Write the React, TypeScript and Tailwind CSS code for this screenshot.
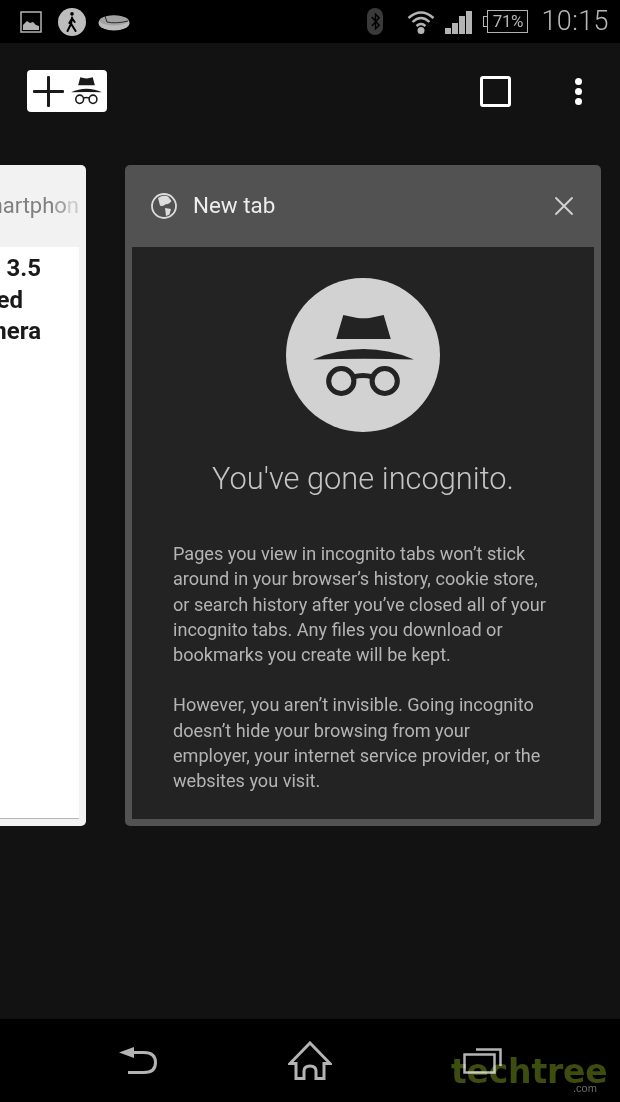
import { X } from 'lucide-react';

function IncognitoGlyph({ className }: { className?: string }) {
    return (
        <svg viewBox="0 0 100 84" preserveAspectRatio="none" className={className} fill="currentColor">
            <path d="M30 1 L44 4 Q50 4.500 56 4 L70 1 L77 25 L23 25 Z" />
            <path d="M0 45.500 Q24 35 50 35 Q76 35 100 45.500 Q50 44 0 45.500 Z" />
            <circle cx="28" cy="67" r="12.500" fill="none" stroke="currentColor" strokeWidth="5" />
            <circle cx="71" cy="67" r="12.500" fill="none" stroke="currentColor" strokeWidth="5" />
            <path d="M40 63 Q49.500 60 59 63" fill="none" stroke="currentColor" strokeWidth="5" />
        </svg>
    );
}

function StatusBar() {
    return (
        <div className="h-[43px] bg-black flex items-center pl-[20px] pr-[11px] text-[#b4b4b4]">
            <svg viewBox="0 0 22 22" className="w-[22px] h-[22px]">
                <rect x="1" y="1" width="20" height="20" fill="none" stroke="currentColor" strokeWidth="1.5" />
                <path d="M3 19 V14 L7 10 L10 12 L13 11 L16 14 L19 15 V19 Z" fill="currentColor" />
            </svg>
            <div className="ml-[16px] w-[28px] h-[28px] rounded-full bg-[#bdbdbd] flex items-center justify-center text-black">
                <svg viewBox="0 0 20 24" className="w-[18px] h-[22px]" fill="none" stroke="currentColor" strokeWidth="2.2" strokeLinecap="round">
                    <circle cx="10" cy="3" r="2" fill="currentColor" stroke="none" />
                    <path d="M10 7 L9 14 L5 22 M9 14 L14 22 M10 8 L7 13 M10 8 L13 12" />
                </svg>
            </div>
            <svg viewBox="0 0 32 18" className="ml-[12px] w-[32px] h-[18px]">
                <ellipse cx="16" cy="10" rx="15.500" ry="7.500" fill="#bcbcbc" />
                <ellipse cx="16" cy="7.500" rx="14.500" ry="5" fill="#a2a2a2" />
                <path d="M7 3 L9 9 Q18 11 30 8" fill="none" stroke="#2a2a2a" strokeWidth="1" />
            </svg>
            <div className="ml-auto w-[16px] h-[27px] rounded-[8px] bg-[#3a3a3a] flex items-center justify-center text-black">
                <svg viewBox="0 0 12 20" className="w-[11px] h-[19px]" fill="none" stroke="currentColor" strokeWidth="1.6">
                    <path d="M2 5 L10 14 L6 18 V2 L10 6 L2 15" />
                </svg>
            </div>
            <svg viewBox="0 0 28 26" className="ml-[24px] w-[28px] h-[26px]" fill="none" stroke="currentColor" strokeWidth="2.4">
                <path d="M1.500 9 Q14 -2 26.500 9" />
                <path d="M5.500 13 Q14 5 22.500 13" />
                <path d="M9.500 17 Q14 13 18.500 17" />
                <circle cx="14" cy="21.500" r="3.500" fill="currentColor" stroke="none" />
            </svg>
            <div className="ml-[10px] flex items-end gap-[1px] h-[24px]">
                <div className="w-[6px] h-[6px] bg-[#b4b4b4]" />
                <div className="w-[6px] h-[11px] bg-[#b4b4b4]" />
                <div className="w-[6px] h-[18px] bg-[#b4b4b4]" />
                <div className="w-[6px] h-[23px] bg-[#b4b4b4]" />
            </div>
            <div className="relative ml-[15px] w-[41px] h-[23px] border border-[#b4b4b4] flex items-center justify-center text-[17px] leading-none font-['Roboto',sans-serif] tracking-tight">
                <div className="absolute left-[-5px] top-[5px] w-[5px] h-[11px] border border-r-0 border-[#b4b4b4]" />
                71%
            </div>
            <div className="ml-[13px] text-[27px] leading-none font-['Roboto',sans-serif] font-light tracking-[0.4px] text-[#b8b8b8]">10:15</div>
        </div>
    );
}

function Toolbar() {
    return (
        <div className="h-[122px] flex items-center pl-[27px] pr-[38px] pb-[26px]">
            <div className="w-[80px] h-[42px] bg-white rounded-[4px] flex items-center pl-[6px] text-[#1a1a1a]">
                <svg viewBox="0 0 31 31" className="w-[31px] h-[31px]" fill="currentColor">
                    <rect x="0" y="14" width="31" height="3" rx="1" />
                    <rect x="14" y="0" width="3" height="31" rx="1" />
                </svg>
                <IncognitoGlyph className="ml-[7px] w-[31px] h-[28px]" />
            </div>
            <div className="ml-auto w-[31px] h-[31px] border-[3px] border-white rounded-[3px]" />
            <div className="ml-[64px] flex flex-col gap-[3px]">
                <div className="w-[7px] h-[7px] rounded-full bg-white" />
                <div className="w-[7px] h-[7px] rounded-full bg-white" />
                <div className="w-[7px] h-[7px] rounded-full bg-white" />
            </div>
        </div>
    );
}

function WebTabCard() {
    return (
        <div className="w-[476px] h-[661px] shrink-0 bg-[#f2f2f2] rounded-[5px] px-[7px] pb-[7px] flex flex-col overflow-hidden">
            <div className="h-[82px] shrink-0 flex items-center justify-end pb-[2px] font-['Roboto',sans-serif] text-[22px] text-[#808080] whitespace-nowrap overflow-hidden">
                Smartph<span className="text-[#a0a0a0]">o</span><span className="text-[#cacaca]">n</span>
            </div>
            <div className="flex-1 bg-white border-b border-[#b8b8b8] pt-[6px] flex flex-col font-['Roboto',sans-serif] font-bold text-[24px] leading-[31.500px] text-[#1a1a1a] whitespace-nowrap text-right">
                <div className="pr-[38px]">l 3.5</div>
                <div className="pr-[56px]">ed</div>
                <div className="pr-[38px]">nera</div>
            </div>
        </div>
    );
}

function IncognitoTabCard() {
    return (
        <div className="w-[476px] h-[661px] shrink-0 bg-[#525252] rounded-[5px] px-[7px] pb-[7px] flex flex-col">
            <div className="h-[82px] shrink-0 flex items-center pl-[19px] pr-[14px]">
                <svg viewBox="0 0 26 26" className="w-[26px] h-[26px] text-[#dcdcdc]">
                    <circle cx="13" cy="13" r="12" fill="none" stroke="currentColor" strokeWidth="1.8" />
                    <path d="M7 5 Q12 1.500 17 3.500 L20.500 8 Q18 12 15 11 Q12 14 9 12.500 Z" fill="currentColor" />
                    <path d="M14 15 L20 16 L18.500 21.500 L15 23 Z" fill="currentColor" />
                </svg>
                <span className="ml-[16px] font-['Roboto',sans-serif] text-[22.400px] text-[#ededed]">New tab</span>
                <X className="ml-auto w-[32px] h-[32px] text-[#d0d0d0]" strokeWidth={1.4} />
            </div>
            <div className="flex-1 bg-[#232323] flex flex-col items-center font-['Roboto',sans-serif]">
                <div className="mt-[31px] w-[154px] h-[154px] rounded-full bg-[#d2d2d2] flex items-center justify-center text-[#232323]">
                    <IncognitoGlyph className="w-[101px] h-[84px] mt-[2px]" />
                </div>
                <h1 className="mt-[28px] text-[30.800px] leading-[38px] font-light text-[#c4c4c4] whitespace-nowrap">You've gone incognito.</h1>
                <div className="mt-[43px] w-full pl-[41px] pr-[46px] text-[18.100px] leading-[25.300px] text-[#b4b4b4]">
                    <p>Pages you view in incognito tabs won’t stick around in your browser’s history, cookie store, or search history after you’ve closed all of your incognito tabs. Any files you download or bookmarks you create will be kept.</p>
                    <p className="mt-[25px]">However, you aren’t invisible. Going incognito doesn’t hide your browsing from your employer, your internet service provider, or the websites you visit.</p>
                </div>
            </div>
        </div>
    );
}

function NavBar() {
    return (
        <div className="relative h-[83px] bg-black flex items-center gap-[131px] pl-[119px] text-[#b4b4b4]">
            <svg viewBox="0 0 38 27" className="w-[38px] h-[27px]" fill="none" stroke="currentColor" strokeWidth="3">
                <path d="M0 5.500 L15 0 V11 Z" fill="currentColor" stroke="none" />
                <path d="M13 5.500 H25 Q36.500 5.500 36.500 15.500 Q36.500 25.500 25 25.500 H9" />
            </svg>
            <svg viewBox="0 0 44 39" className="w-[44px] h-[39px]" fill="none" stroke="currentColor" strokeWidth="3">
                <path d="M8 37.500 V22.500 H2 L22 2 L42 22.500 H36 V37.500 H28 V30 Q28 25 22 25 Q16 25 16 30 V37.500 Z" />
            </svg>
            <svg viewBox="0 0 39 26" className="w-[39px] h-[26px]" fill="none" stroke="currentColor" strokeWidth="2.500">
                <path d="M13 1.500 H37.500 V18" />
                <rect x="1.500" y="6.500" width="30" height="18" />
            </svg>
            {/* watermark sits over the recents button */}
            <div className="absolute left-[451px] top-[42px] font-['DejaVu_Sans',sans-serif] font-bold text-[33px] leading-[22px] tracking-[-0.2px] text-[#3d4d0f] mix-blend-screen">techtree</div>
            <div className="absolute left-[573px] top-[64px] font-['Liberation_Sans',sans-serif] text-[11px] leading-[10px] text-[#6a6a6a]">.com</div>
        </div>
    );
}

export default function App() {
    return (
        <div className="w-[620px] h-[1102px] bg-[#121212] flex flex-col overflow-hidden">
            <StatusBar />
            <Toolbar />
            <div className="flex-1 overflow-hidden">
                <div className="flex gap-[39px] -ml-[390px]">
                    <WebTabCard />
                    <IncognitoTabCard />
                </div>
            </div>
            <NavBar />
        </div>
    );
}
